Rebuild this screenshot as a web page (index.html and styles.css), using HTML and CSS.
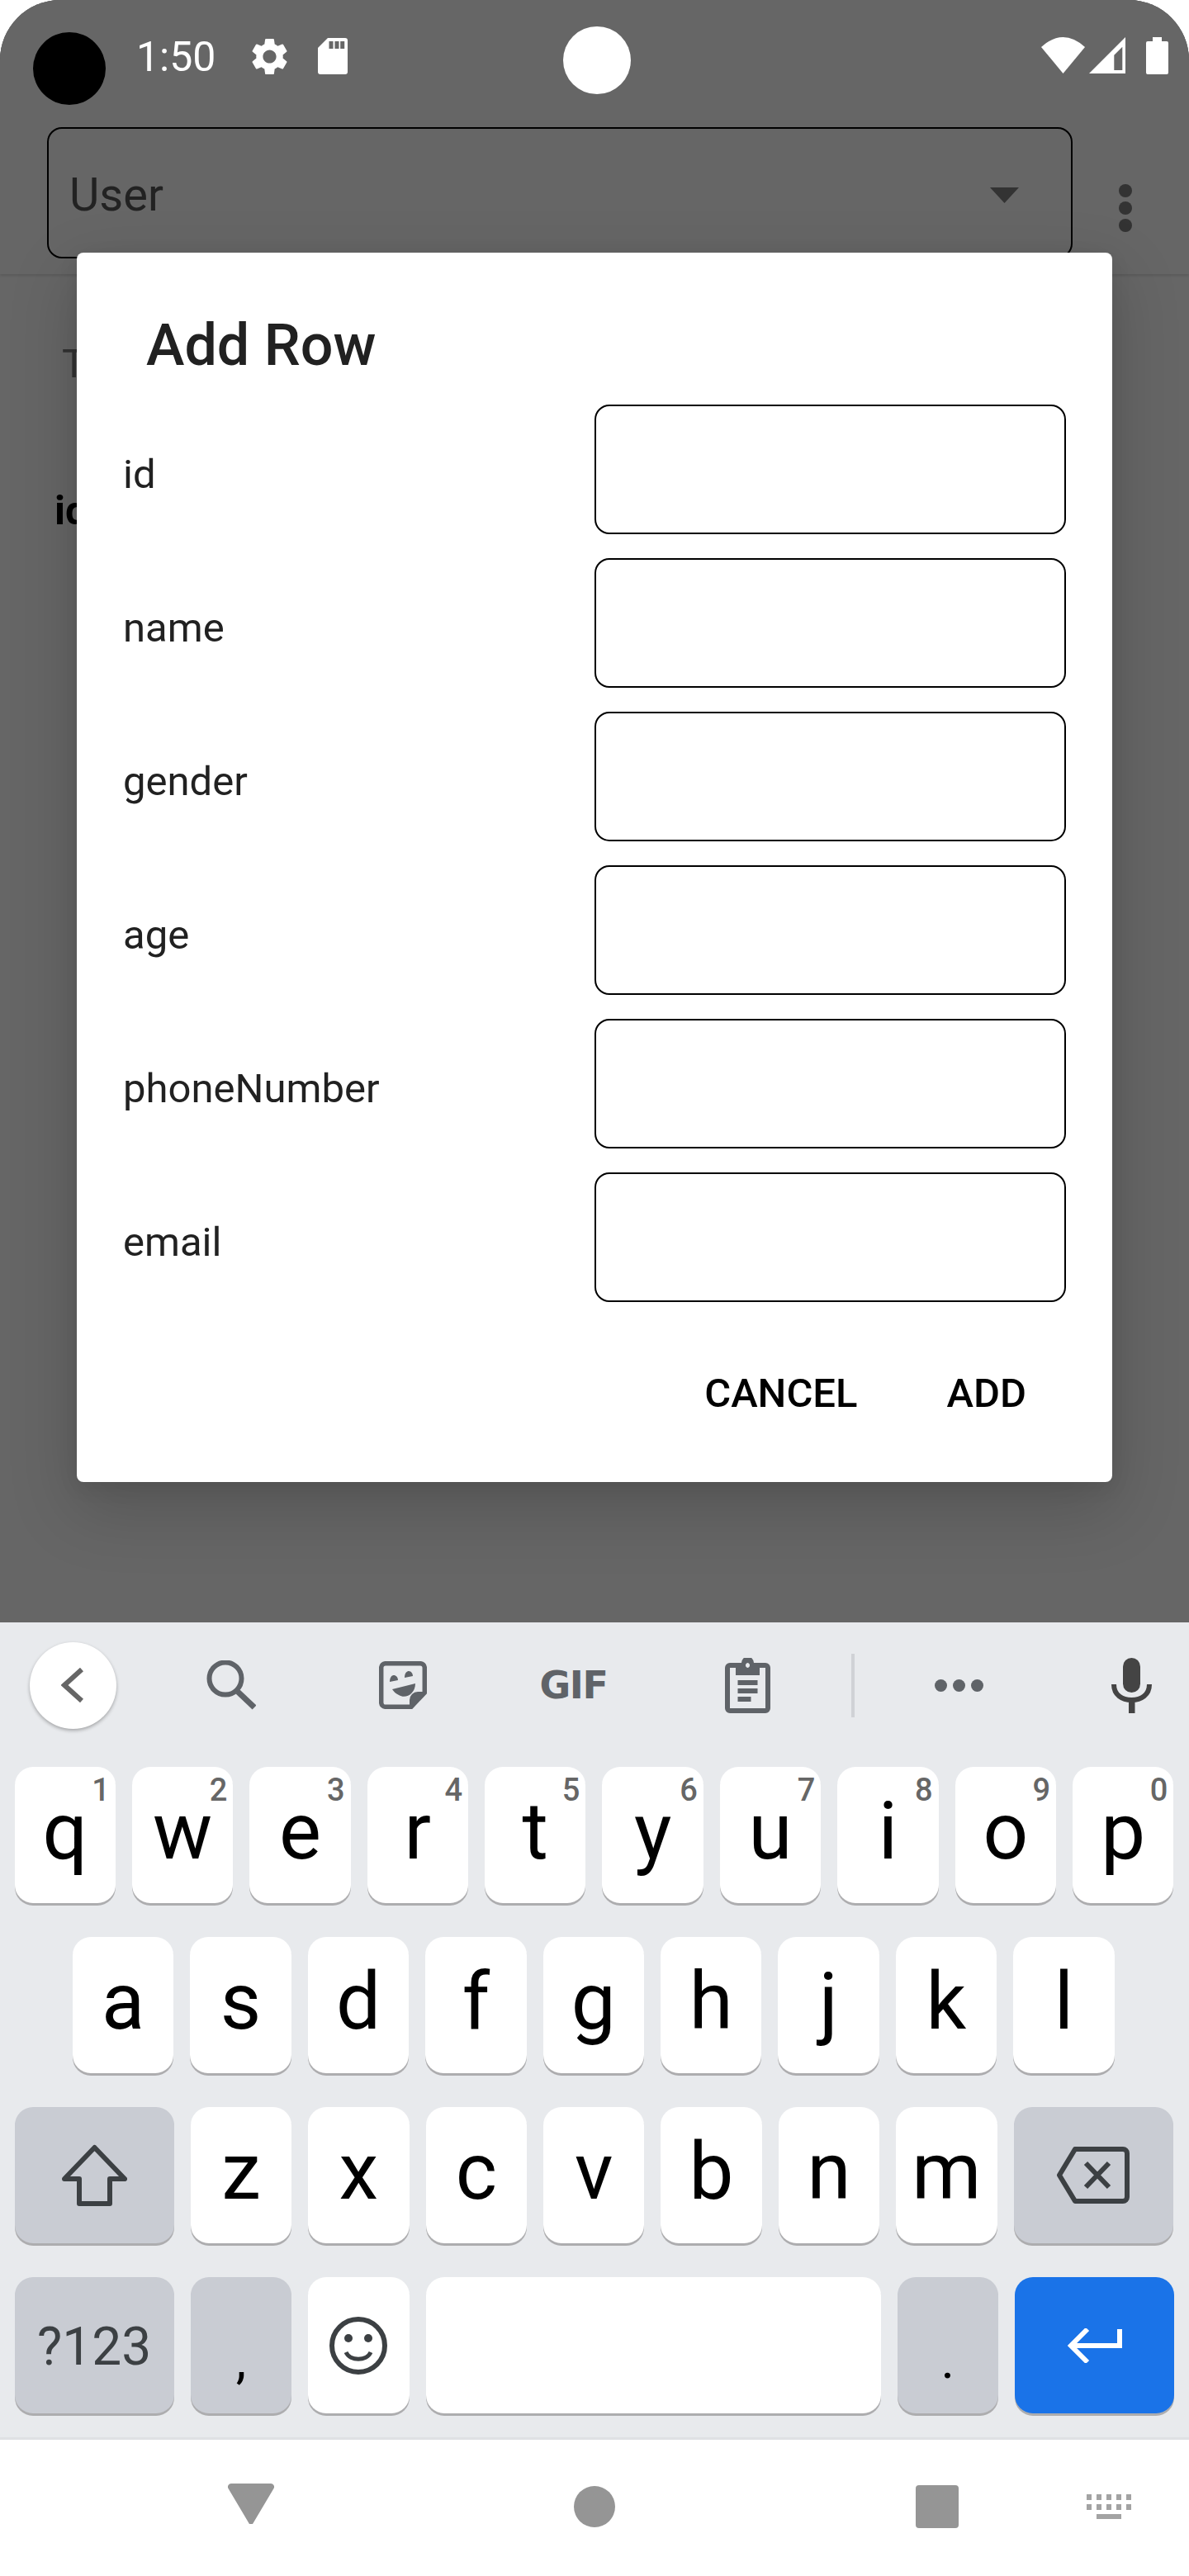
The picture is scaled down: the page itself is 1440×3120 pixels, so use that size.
FILE: index.html
```html
<!DOCTYPE html>
<html lang="en">
<head>
<meta charset="utf-8">
<title>Add Row</title>
<link rel="stylesheet" href="styles.css">
</head>
<body>
<div class="screen">
  <section class="scrim">
    <header class="appbar">
      <div class="status">
        <span class="camera"></span>
        <span class="time">1:50</span>
        <svg class="ic-gear" viewBox="2.5 2 19 20"><path fill="#fff" d="M19.14 12.94c.04-.3.06-.61.06-.94 0-.32-.02-.64-.07-.94l2.03-1.58c.18-.14.23-.41.12-.61l-1.92-3.32c-.12-.22-.37-.29-.59-.22l-2.39.96c-.5-.38-1.03-.7-1.62-.94l-.36-2.54c-.04-.24-.24-.41-.48-.41h-3.84c-.24 0-.43.17-.47.41l-.36 2.54c-.59.24-1.13.57-1.62.94l-2.39-.96c-.22-.08-.47 0-.59.22L2.74 8.87c-.12.21-.08.47.12.61l2.03 1.58c-.05.3-.09.63-.09.94s.02.64.07.94l-2.03 1.58c-.18.14-.23.41-.12.61l1.92 3.32c.12.22.37.29.59.22l2.39-.96c.5.38 1.03.7 1.62.94l.36 2.54c.05.24.24.41.48.41h3.84c.24 0 .44-.17.47-.41l.36-2.54c.59-.24 1.13-.56 1.62-.94l2.39.96c.22.08.47 0 .59-.22l1.92-3.32c.12-.22.07-.47-.12-.61l-2.01-1.58zM12 15.6c-1.98 0-3.6-1.62-3.6-3.6s1.62-3.6 3.6-3.6 3.6 1.62 3.6 3.6-1.62 3.6-3.6 3.6z"/></svg>
        <svg class="ic-sd" viewBox="0 0 36 44"><path fill="#fff" d="M12 0H33a3 3 0 0 1 3 3V41a3 3 0 0 1-3 3H3a3 3 0 0 1-3-3V12z"/><path fill="#666" d="M13.5 4h5v9h-5zM20.5 4h5v9h-5zM27.2 4h5v9h-5z"/></svg>
        <span class="punch"></span>
        <svg class="ic-wifi" viewBox="0 0 53 44"><path fill="#fff" d="M0 12Q26.5-12 53 12L26.5 44z"/></svg>
        <svg class="ic-signal" viewBox="0 0 44 44"><path fill="#fff" fill-rule="evenodd" d="M44 0V44H0zM30.3 21.7V40H40.3V11.7z"/></svg>
        <svg class="ic-battery" viewBox="0 0 27 45"><path fill="#fff" d="M8 0H19V5H25a2 2 0 0 1 2 2V43a2 2 0 0 1-2 2H2a2 2 0 0 1-2-2V7a2 2 0 0 1 2-2H8z"/></svg>
      </div>
      <div class="toolbar">
        <div class="select">
          <span class="select-value">User</span>
          <svg class="select-arrow" viewBox="0 0 35 19"><path fill="#333" d="M0 0H35L17.5 19z"/></svg>
        </div>
        <div class="more"><i></i><i></i><i></i></div>
      </div>
    </header>
    <main class="content">
      <p class="table-title">T</p>
      <p class="col-head">id</p>
    </main>
    <div class="dialog">
      <h1 class="dialog-title">Add Row</h1>
      <div class="fields">
        <div class="field"><label class="field-label">id</label><span class="field-input"></span></div>
        <div class="field"><label class="field-label">name</label><span class="field-input"></span></div>
        <div class="field"><label class="field-label">gender</label><span class="field-input"></span></div>
        <div class="field"><label class="field-label">age</label><span class="field-input"></span></div>
        <div class="field"><label class="field-label">phoneNumber</label><span class="field-input"></span></div>
        <div class="field"><label class="field-label">email</label><span class="field-input"></span></div>
      </div>
      <div class="actions"><span class="action">CANCEL</span><span class="action">ADD</span></div>
    </div>
  </section>

  <section class="keyboard">
    <div class="kb-tools">
      <span class="kb-back"><svg class="t-chev" viewBox="0 0 27 42"><path fill="none" stroke="#666" stroke-width="6" d="M25 2L4 21L25 40"/></svg></span>
      <svg class="t-search" viewBox="0 0 60 60"><circle cx="23" cy="22" r="19.5" fill="none" stroke="#5f6368" stroke-width="6"/><path stroke="#5f6368" stroke-width="7" d="M38 38L58 57"/></svg>
      <svg class="t-sticker" viewBox="0 0 58 58"><path fill="none" stroke="#5f6368" stroke-width="5.5" d="M8 2.7H50a5.3 5.3 0 0 1 5.3 5.3V38L39 55.3H8a5.3 5.3 0 0 1-5.3-5.3V8A5.3 5.3 0 0 1 8 2.7z"/><path fill="#5f6368" d="M55 39L39 56L37 55V47a10 10 0 0 1 10-10h8zM13 25C13 19 16 17 18 17C21 17 23 20 23 23zM31 20C31 14 34 12 36 12C39 12 41 15 41 18zM16 34L44 27C44 40 32 46 24 41C20 39 18 37 16 34z"/></svg>
      <span class="t-gif">GIF</span>
      <svg class="t-clip" viewBox="0 0 55 67"><path fill="none" stroke="#5f6368" stroke-width="6" d="M14 9H6a3 3 0 0 0-3 3V61a3 3 0 0 0 3 3H49a3 3 0 0 0 3-3V12a3 3 0 0 0-3-3H41"/><path fill="#5f6368" fill-rule="evenodd" d="M13 6H20a7.5 7.5 0 0 1 15 0H42V21H13zM27.5 6a2.5 3 0 1 0 .01 0z"/><path fill="#5f6368" d="M15.5 27H39.5V33H15.5zM15.5 37H39.5V43H15.5zM15.5 47H31.5V53H15.5z"/></svg>
      <span class="t-divider"></span>
      <span class="t-dots"><i></i><i></i><i></i></span>
      <svg class="t-mic" viewBox="0 0 49 67"><rect x="14" y="0" width="21" height="42" rx="10.5" fill="#444"/><path fill="none" stroke="#444" stroke-width="6" d="M3 32C3 45 13 51 24.5 51C36 51 46 45 46 32"/><path fill="#444" d="M21 50H28.5V67H21z"/></svg>
    </div>
    <div class="kb-row">
      <span class="key"><sup class="hint">1</sup>q</span>
      <span class="key"><sup class="hint">2</sup>w</span>
      <span class="key"><sup class="hint">3</sup>e</span>
      <span class="key"><sup class="hint">4</sup>r</span>
      <span class="key"><sup class="hint">5</sup>t</span>
      <span class="key"><sup class="hint">6</sup>y</span>
      <span class="key"><sup class="hint">7</sup>u</span>
      <span class="key"><sup class="hint">8</sup>i</span>
      <span class="key"><sup class="hint">9</sup>o</span>
      <span class="key"><sup class="hint">0</sup>p</span>
    </div>
    <div class="kb-row kb-row-home">
      <span class="key">a</span><span class="key">s</span><span class="key">d</span><span class="key">f</span><span class="key">g</span><span class="key">h</span><span class="key">j</span><span class="key">k</span><span class="key">l</span>
    </div>
    <div class="kb-row">
      <span class="key key-wide key-mod"><svg class="k-shift" viewBox="0 0 79 75"><path fill="none" stroke="#3c4043" stroke-width="6" stroke-linejoin="round" d="M39.5 4L76 42H58V72H21V42H3z"/></svg></span>
      <span class="key">z</span><span class="key">x</span><span class="key">c</span><span class="key">v</span><span class="key">b</span><span class="key">n</span><span class="key">m</span>
      <span class="key key-wide key-mod"><svg class="k-back" viewBox="0 0 88 69"><path fill="none" stroke="#3c4043" stroke-width="6" stroke-linejoin="round" d="M22 3H80a5 5 0 0 1 5 5V61a5 5 0 0 1-5 5H22L3 34.500z"/><path fill="none" stroke="#3c4043" stroke-width="6" d="M35 20L63 49M63 20L35 49"/></svg></span>
    </div>
    <div class="kb-row">
      <span class="key key-wide key-mod key-sym">?123</span>
      <span class="key key-mod key-punct">,</span>
      <span class="key"><svg class="k-emoji" viewBox="0 0 70 70"><circle cx="35" cy="35" r="32" fill="none" stroke="#3c4043" stroke-width="6"/><circle cx="23" cy="26" r="5" fill="#3c4043"/><circle cx="47" cy="26" r="5" fill="#3c4043"/><path fill="none" stroke="#3c4043" stroke-width="5" d="M20 43C25 54 45 54 50 43"/></svg></span>
      <span class="key key-space"></span>
      <span class="key key-mod key-punct">.</span>
      <span class="key key-wide key-enter"><svg class="k-enter" viewBox="0 0 67 42"><path fill="none" stroke="#fff" stroke-width="6" d="M64 1V21H6M25 1L5 21L25 41"/></svg></span>
    </div>
  </section>

  <nav class="navbar">
    <svg class="n-back" viewBox="0 0 56 49"><path fill="#959595" d="M4 0H52a4 4 0 0 1 3.500 6L30 49H26L.5 6A4 4 0 0 1 4 0z"/></svg>
    <span class="n-home"></span>
    <span class="n-recent"></span>
    <svg class="n-kbd" viewBox="0 0 54 30"><path fill="#a3a3a3" d="M0 0h6v7H0zM12 0h6v7h-6zM24 0h6v7h-6zM36 0h6v7h-6zM48 0h6v7h-6zM0 12h6v7H0zM12 12h6v7h-6zM24 12h6v7h-6zM36 12h6v7h-6zM48 12h6v7h-6zM12 24h30v6H12z"/></svg>
  </nav>
</div>
</body>
</html>
```

FILE: styles.css
```css
* { box-sizing: border-box; }
html, body { margin: 0; padding: 0; background: #fff; }
body { font-family: Roboto, "Liberation Sans", sans-serif; }

.screen {
  width: 1440px;
  height: 3120px;
  display: flex;
  flex-direction: column;
  border-radius: 73px 73px 0 0;
  overflow: hidden;
  background: #666;
}

.scrim { position: relative; flex: 1; overflow: hidden; background: #666; }

.appbar { height: 332px; background: #666; box-shadow: 0 2px 3px rgba(0,0,0,.12); }

.status { height: 154px; display: flex; align-items: flex-start; padding-left: 40px; }
.camera { width: 88px; height: 88px; margin-top: 39px; border-radius: 50%; background: #000; }
.time { margin: 41px 0 0 37px; font-size: 50px; line-height: 56px; color: #fff; }
.ic-gear { width: 43px; height: 45px; margin: 46px 0 0 44px; }
.ic-sd { width: 36px; height: 44px; margin: 46px 0 0 37px; }
.punch { width: 82px; height: 82px; margin: 32px 0 0 261px; border-radius: 50%; background: #fff; }
.ic-wifi { width: 53px; height: 44px; margin: 45px 0 0 497px; }
.ic-signal { width: 44px; height: 44px; margin: 45px 0 0 5px; }
.ic-battery { width: 27px; height: 45px; margin: 45px 0 0 25px; }

.toolbar { display: flex; align-items: flex-start; padding-left: 57px; }
.select {
  width: 1242px;
  height: 159px;
  display: flex;
  align-items: center;
  justify-content: space-between;
  padding: 0 63px 0 25px;
  border: 2px solid #000;
  border-radius: 18px;
}
.select-value { margin-top: 4px; font-size: 56px; line-height: 64px; color: #222; }
.select-arrow { width: 35px; height: 19px; margin-top: 6px; }
.more { display: flex; flex-direction: column; gap: 5px; margin: 69px 0 0 56px; }
.more i { width: 16px; height: 16px; border-radius: 50%; background: #333; }

.content { padding-top: 81px; font-size: 49px; line-height: 56px; }
.content p { margin: 0; }
.table-title { padding-left: 75px; color: #333; }
.col-head { padding: 122px 0 0 66px; color: #000; font-weight: 700; }

.dialog {
  position: absolute;
  top: 306px;
  left: 93px;
  width: 1254px;
  height: 1489px;
  padding: 71px 56px 0;
  background: #fff;
  border-radius: 8px;
  box-shadow: 0 30px 80px 6px rgba(0,0,0,.16), 0 6px 24px rgba(0,0,0,.08);
}
.dialog-title {
  margin: 0 0 31px 28px;
  font-size: 70px;
  line-height: 82px;
  font-weight: 500;
  color: #212121;
}
.fields { display: flex; flex-direction: column; gap: 29px; }
.field { display: flex; align-items: center; justify-content: space-between; height: 157px; }
.field-label { padding-top: 13px; font-size: 49px; line-height: 56px; color: #212121; }
.field-input { width: 571px; height: 157px; border: 2px solid #000; border-radius: 18px; }
.actions { display: flex; justify-content: flex-end; gap: 108px; margin-top: 83px; padding-right: 48px; }
.action { font-size: 49px; line-height: 56px; font-weight: 500; color: #000; }

.keyboard {
  height: 990px;
  background: #e8eaed;
  border-bottom: 3px solid #dfe1e4;
}
.kb-tools {
  display: grid;
  grid-template-columns: 176px 208px 207px 207px 214px 42px 214px 172px;
  justify-items: center;
  align-items: center;
  height: 152px;
  margin-bottom: 23px;
}
.kb-back {
  display: flex;
  align-items: center;
  justify-content: center;
  width: 105px;
  height: 105px;
  border-radius: 50%;
  background: #fff;
  box-shadow: 0 2px 4px rgba(0,0,0,.3);
}
.t-chev { width: 27px; height: 42px; margin-left: -2px; }
.t-search { width: 60px; height: 60px; }
.t-sticker { width: 58px; height: 58px; }
.t-gif {
  font-family: "DejaVu Sans", sans-serif;
  font-weight: 700;
  font-size: 46px;
  line-height: 44px;
  letter-spacing: -1.5px;
  color: #5f6368;
}
.t-clip { width: 55px; height: 67px; }
.t-divider { width: 4px; height: 77px; background: #d0d2d6; }
.t-dots { display: flex; gap: 7px; }
.t-dots i { width: 15px; height: 15px; border-radius: 50%; background: #5f6368; }
.t-mic { width: 49px; height: 67px; margin-left: 32px; }

.kb-row { display: flex; gap: 20px; padding-left: 17.5px; margin-bottom: 41px; }
.kb-row-home { padding-left: 88px; }
.key {
  position: relative;
  display: flex;
  align-items: center;
  justify-content: center;
  flex: none;
  width: 122.4px;
  height: 165px;
  padding-bottom: 9px;
  border-radius: 22px;
  background: #fff;
  box-shadow: 0 3px 0 #adadaf;
  font-size: 96px;
  line-height: 100px;
  color: #000;
}
.key-wide { width: 193.3px; }
.key-mod { background: #c9ccd3; }
.key-space { width: 551px; }
.key-enter { background: #1a73e8; }
.key-sym { font-size: 64px; line-height: 72px; color: #3c4043; padding: 4px 0 0; }
.key-punct { font-size: 63px; line-height: 72px; padding: 36px 0 0; }
.hint {
  position: absolute;
  top: 9px;
  right: 7px;
  font-size: 38px;
  line-height: 38px;
  font-weight: 500;
  color: #666;
}
.k-shift { width: 79px; height: 75px; margin-top: 9px; }
.k-back { width: 88px; height: 69px; margin-top: 9px; }
.k-emoji { width: 70px; height: 70px; margin-top: 9px; }
.k-enter { width: 67px; height: 42px; margin-top: 9px; }

.navbar { display: flex; align-items: flex-start; height: 165px; background: #fff; padding-left: 276px; }
.n-back { width: 56px; height: 49px; margin-top: 53px; }
.n-home { width: 50px; height: 50px; margin: 56px 0 0 363px; border-radius: 50%; background: #959595; }
.n-recent { width: 52px; height: 52px; margin: 55px 0 0 364px; border-radius: 4px; background: #959595; }
.n-kbd { width: 54px; height: 30px; margin: 66px 0 0 155px; }
```
